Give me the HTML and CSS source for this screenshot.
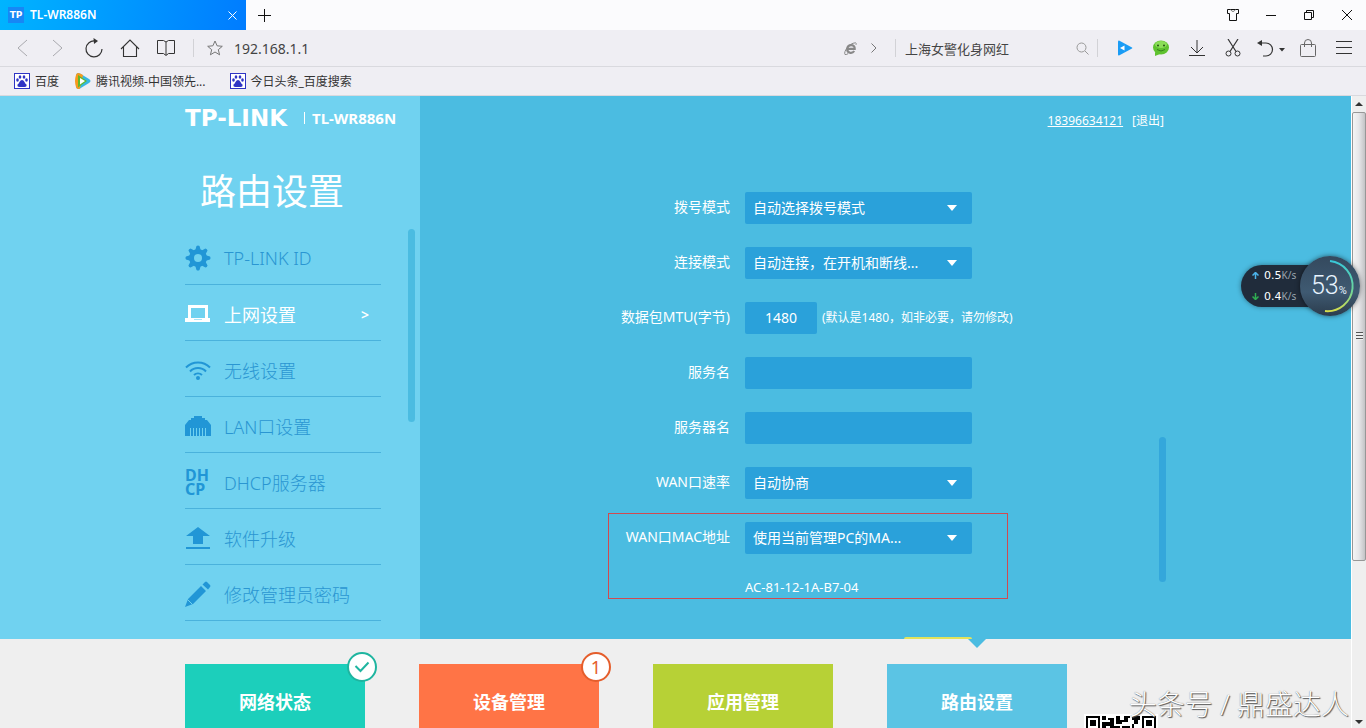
FILE: index.html
```html
<!DOCTYPE html>
<html lang="zh-CN">
  <head>
    <meta charset="UTF-8" />
    <meta name="viewport" content="width=device-width, initial-scale=1.0" />
    <title>TL-WR886N</title>
    <link rel="stylesheet" href="styles.css">
  </head>
  <body>
    <header class="browser">
      <div class="tabbar">
        <div class="tab">
          <span class="favicon">TP</span>
          <span class="tab-title">TL-WR886N</span>
          <button class="tab-close" aria-label="关闭标签">
            <svg width="9" height="9" viewBox="0 0 9 9"><path d="M.5.5l8 8M8.500 .5l-8 8" stroke="#fff"/></svg>
          </button>
        </div>
        <button class="icon" aria-label="新标签">
          <svg width="13" height="13" viewBox="0 0 13 13"><path d="M6.500 0v13M0 6.500h13" stroke="#111"/></svg>
        </button>
        <div class="window-buttons">
          <button class="winbtn" aria-label="皮肤">
            <svg width="14" height="14" viewBox="0 0 14 14" fill="none" stroke="#111"><path d="M1.500 1.500h11v4h-2v7h-7v-7h-2z"/><path d="M4.500 1.500q2.500 4 5 0" stroke="#777"/></svg>
          </button>
          <button class="winbtn" aria-label="最小化">
            <svg width="12" height="12" viewBox="0 0 12 12"><path d="M1 6.500h10" stroke="#111"/></svg>
          </button>
          <button class="winbtn" aria-label="还原">
            <svg width="12" height="12" viewBox="0 0 12 12" fill="none" stroke="#111"><path d="M1.500 3.500h7v7h-7zM3.500 3v-1.500h7v7H9"/></svg>
          </button>
          <button class="winbtn" aria-label="关闭">
            <svg width="12" height="12" viewBox="0 0 12 12"><path d="M1 1l10 10M11 1L1 11" stroke="#111"/></svg>
          </button>
        </div>
      </div>

      <div class="toolbar">
        <button class="icon" aria-label="后退">
          <svg width="12" height="18" viewBox="0 0 12 18" fill="none" stroke="#a9a9ae"><path d="M11 1L2 9l9 8"/></svg>
        </button>
        <button class="icon" aria-label="前进">
          <svg width="12" height="18" viewBox="0 0 12 18" fill="none" stroke="#a9a9ae"><path d="M1 1l9 8-9 8"/></svg>
        </button>
        <button class="icon" aria-label="刷新">
          <svg width="18" height="20" viewBox="0 0 18 20" fill="none" stroke="#333"><path d="M10 3a8 8 0 1 0 7 8" stroke-width="1.200"/><path d="M8.500 0l4.500 3-4 3z" fill="#333" stroke="none"/></svg>
        </button>
        <button class="icon" aria-label="主页">
          <svg width="20" height="18" viewBox="0 0 20 18" fill="none" stroke="#333"><path d="M1 10l9-9 9 9M3.500 8v9.500h13V8" stroke-width="1.100"/></svg>
        </button>
        <button class="icon" aria-label="收藏夹">
          <svg width="18" height="16" viewBox="0 0 18 16" fill="none" stroke="#333"><path d="M.5.5h6L9 2l2.500-1.500h6v13h-6L9 15.500 6.500 13.500h-6zM9 2v13"/></svg>
        </button>
        <span class="divider"></span>
        <button class="icon small" aria-label="收藏">
          <svg width="16" height="16" viewBox="0 0 16 16" fill="none" stroke="#777"><path d="M8 1l2.100 4.800 5.200.5-4 3.400 1.300 5.100L8 12l-4.600 2.800 1.300-5.100-4-3.400 5.200-.5z"/></svg>
        </button>
        <input class="address" type="text" value="192.168.1.1" aria-label="地址">
        <button class="icon small" aria-label="内核">
          <svg width="13" height="13" viewBox="0 0 13 13" fill="none" stroke="#888"><path d="M3.500 6.800h7.200c.3-5-7-5-7.500 0-.3 4.500 5 5.200 7 2.200" stroke-width="2.200"/><path d="M1 12.500C-.8 10 5 1 11.500.8q1.200.2.500 2M1 12.500q1 .5 3-.8"/></svg>
        </button>
        <button class="icon small" aria-label="更多">
          <svg width="6" height="10" viewBox="0 0 6 10" fill="none" stroke="#777"><path d="M.5.5L5 5 .5 9.500"/></svg>
        </button>
        <span class="divider"></span>
        <input class="search" type="text" value="上海女警化身网红" aria-label="搜索">
        <button class="icon small" aria-label="搜索">
          <svg width="13" height="13" viewBox="0 0 13 13" fill="none" stroke="#999"><circle cx="5.500" cy="5.500" r="4.500"/><path d="M9 9l3.500 3.500"/></svg>
        </button>
        <span class="divider search-end"></span>
        <button class="icon" aria-label="视频">
          <svg width="16" height="18" viewBox="0 0 16 18"><path d="M2 1.500l13 7q.7.500 0 1l-13 7q-1 .2-1-1v-13q0-1 1-1z" fill="#1a9cf5"/><path d="M7.500 6.500v5L3 9z" fill="#fff"/></svg>
        </button>
        <button class="icon" aria-label="微信">
          <svg width="18" height="16" viewBox="0 0 18 16"><ellipse cx="9" cy="7.500" rx="8" ry="7" fill="#5fc22f"/><path d="M3 12v4l5-2z" fill="#5fc22f"/><ellipse cx="9" cy="4.500" rx="6" ry="3.500" fill="#8bdd58"/><circle cx="6" cy="5.500" r="1" fill="#244f12"/><circle cx="12" cy="5.500" r="1" fill="#244f12"/><path d="M5 9.500q4 3 8 0" fill="none" stroke="#35801b"/></svg>
        </button>
        <button class="icon" aria-label="下载">
          <svg width="18" height="17" viewBox="0 0 18 17" fill="none" stroke="#333"><path d="M9 0v13M3 7l6 6 6-6M1 15.500h16"/></svg>
        </button>
        <button class="icon" aria-label="截图">
          <svg width="16" height="18" viewBox="0 0 16 18" fill="none" stroke="#333"><path d="M3 0l8 12.500M13 0L5 12.500" stroke-width="1.200"/><circle cx="3.500" cy="14.500" r="2.500"/><circle cx="12.500" cy="14.500" r="2.500"/></svg>
        </button>
        <button class="icon undo" aria-label="撤销">
          <svg width="28" height="17" viewBox="0 0 28 17" fill="none" stroke="#333"><path d="M3 3h6a6 6 0 0 1 0 13H6" stroke-width="1.200"/><path d="M0 3l5-3v6z" fill="#333" stroke="none"/><path d="M22 8h6l-3 3.500z" fill="#333" stroke="none"/></svg>
        </button>
        <button class="icon" aria-label="购物">
          <svg width="16" height="19" viewBox="0 0 16 19" fill="none" stroke="#666"><rect x=".5" y="5.500" width="15" height="12" rx="1"/><path d="M4.500 8V4a3.500 3.500 0 0 1 7 0v4"/></svg>
        </button>
        <button class="icon" aria-label="菜单">
          <svg width="16" height="14" viewBox="0 0 16 14" stroke="#333"><path d="M0 .5h16M0 6.500h16M0 12.500h16"/></svg>
        </button>
      </div>

      <nav class="bookmarks">
        <a href="#">
          <svg width="16" height="16" viewBox="0 0 16 16"><rect x=".5" y=".5" width="15" height="15" fill="#fff" stroke="#2e34c4"/><g fill="#2e34c4"><ellipse cx="3.500" cy="7" rx="1.300" ry="1.700"/><ellipse cx="6" cy="4" rx="1.300" ry="1.800"/><ellipse cx="10" cy="4" rx="1.300" ry="1.800"/><ellipse cx="12.500" cy="7" rx="1.300" ry="1.700"/><path d="M8 7q1.500 0 2.500 2t2 2.500q.5 2.500-2 2.500h-5q-2.500 0-2-2.500 1-.5 2-2.500T8 7z"/></g></svg>
          百度</a>
        <a href="#">
          <svg width="16" height="16" viewBox="0 0 16 16"><path d="M1 2Q2-1 5 .5l9 5.500q3 2 0 4l-9 5.500Q2 17 1 14z" fill="#35b7e3"/><path d="M1 2Q2-1 5 .5L8 2 5 15.500Q2 17 1 14-1 8 1 2z" fill="#f7991c"/><path d="M3 2l9 6-9 6.500z" fill="#5fb82c"/><path d="M5 5l5 3-5 3.500z" fill="#fff"/></svg>
          腾讯视频-中国领先...</a>
        <a href="#">
          <svg width="16" height="16" viewBox="0 0 16 16"><rect x=".5" y=".5" width="15" height="15" fill="#fff" stroke="#2e34c4"/><g fill="#2e34c4"><ellipse cx="3.500" cy="7" rx="1.300" ry="1.700"/><ellipse cx="6" cy="4" rx="1.300" ry="1.800"/><ellipse cx="10" cy="4" rx="1.300" ry="1.800"/><ellipse cx="12.500" cy="7" rx="1.300" ry="1.700"/><path d="M8 7q1.500 0 2.500 2t2 2.500q.5 2.500-2 2.500h-5q-2.500 0-2-2.500 1-.5 2-2.500T8 7z"/></g></svg>
          今日头条_百度搜索</a>
      </nav>
    </header>

    <div class="viewport">
      <div class="page">
        <div class="panel">
          <aside class="sidebar">
            <div class="brand">
              <span class="logo">TP-LINK</span>
              <span class="model">TL-WR886N</span>
            </div>
            <h1>路由设置</h1>
            <ul class="menu">
              <li><a href="#">
                <svg width="26" height="26" viewBox="0 0 26 26"><g fill="#2196d6"><circle cx="13" cy="13" r="9"/><g id="teeth"><path d="M10 6l1.500-5q1.500-1 3 0L16 6v14l-1.500 5q-1.500 1-3 0L10 20zM6 10l-5 1.500q-1 1.500 0 3L6 16h14l5-1.500q1-1.500 0-3L20 10z"/></g><use href="#teeth" transform="rotate(45 13 13)"/></g><circle cx="13" cy="13" r="4" fill="#70d2f0"/></svg>
                TP-LINK ID</a></li>
              <li class="active"><a href="#">
                <svg width="26" height="26" viewBox="0 0 26 26"><path d="M3 4h20v13h2v4H0v-4h3zM6 7v10h14V7z" fill="#fff" fill-rule="evenodd"/><path d="M9 18.500h8" stroke="#a9e4f6"/></svg>
                上网设置<span class="arrow">&gt;</span></a></li>
              <li><a href="#">
                <svg width="26" height="26" viewBox="0 0 26 26" fill="none" stroke="#2196d6" stroke-width="2"><path d="M1 10.500a17 17 0 0 1 24 0M5 14.500a11 11 0 0 1 16 0M9 18a6 6 0 0 1 8 0"/><circle cx="13" cy="21" r="2" fill="#2196d6" stroke="none"/></svg>
                无线设置</a></li>
              <li><a href="#">
                <svg width="26" height="26" viewBox="0 0 26 26"><path d="M0 23V12l4-5h2V5h3V3h8v2h3v2h2l4 5v11z" fill="#2196d6"/><path d="M5.500 15v8M8.500 15v8M11.500 15v8M14.500 15v8M17.500 15v8M20.500 15v8" stroke="#70d2f0"/></svg>
                LAN口设置</a></li>
              <li><a href="#">
                <span class="dhcp-icon">DH<br>CP</span>
                DHCP服务器</a></li>
              <li><a href="#">
                <svg width="26" height="26" viewBox="0 0 26 26" fill="#2196d6"><path d="M13 2l12 9h-7v8H8v-8H1zM1 22h24v2H1z"/></svg>
                软件升级</a></li>
              <li><a href="#">
                <svg width="26" height="26" viewBox="0 0 26 26" fill="#2196d6"><path d="M16 5l5 5L8 23l-8 3 3-8zM17.500 3.500L20 1q1-1 2 0l3 3q1 1 0 2l-2 2.500z"/><path d="M2.500 18.500l5 5" stroke="#70d2f0"/></svg>
                修改管理员密码</a></li>
            </ul>
            <div class="menu-scroll"></div>
          </aside>

          <main class="main">
            <div class="account">
              <a href="#" class="user">18396634121</a>
              <a href="#">[退出]</a>
            </div>
            <form class="form">
              <div class="row">
                <label for="dial">拨号模式</label>
                <div class="select"><select id="dial"><option>自动选择拨号模式</option></select></div>
              </div>
              <div class="row">
                <label for="connect">连接模式</label>
                <div class="select"><select id="connect"><option>自动连接，在开机和断线...</option></select></div>
              </div>
              <div class="row">
                <label for="mtu">数据包MTU(字节)</label>
                <input id="mtu" class="mtu" type="text" value="1480">
                <span class="hint">(默认是1480，如非必要，请勿修改)</span>
              </div>
              <div class="row">
                <label for="service">服务名</label>
                <input id="service" type="text">
              </div>
              <div class="row">
                <label for="server">服务器名</label>
                <input id="server" type="text">
              </div>
              <div class="row">
                <label for="speed">WAN口速率</label>
                <div class="select"><select id="speed"><option>自动协商</option></select></div>
              </div>
              <div class="mac">
                <div class="row">
                  <label for="mac">WAN口MAC地址</label>
                  <div class="select"><select id="mac"><option>使用当前管理PC的MA...</option></select></div>
                </div>
                <p>AC-81-12-1A-B7-04</p>
              </div>
              <button type="button" class="save" aria-label="保存"></button>
            </form>
            <div class="form-scroll"></div>
          </main>
        </div>

        <footer class="footer">
          <nav class="tiles">
            <a href="#" class="tile status">网络状态
              <span class="badge"><svg width="16" height="12" viewBox="0 0 16 12"><path d="M1.500 5l5 5 8-8.500" fill="none" stroke="#1fb5a0" stroke-width="2"/></svg></span>
            </a>
            <a href="#" class="tile devices">设备管理<span class="badge">1</span></a>
            <a href="#" class="tile apps">应用管理</a>
            <a href="#" class="tile router">路由设置</a>
          </nav>
          <svg class="qr" width="74" height="74" viewBox="0 0 74 74"><rect width="74" height="74" fill="#fff"/><g fill="none" stroke="#000" stroke-width="2"><path d="M3 3h12v12H3zM59 3h12v12H59z"/></g><path d="M6 6h6v6H6zM62 6h6v6h-6zM18 2h4v4h-4zM24 4h6v2h-6zM32 2h4v4h4V2h6v2h-2v4h-6v2h-6zM48 2h8v4h-2v4h-4V6h-2zM18 8h8v4h-4v2h-4zM26 6h4v6h6v2H26zM38 12h8v4h-8zM48 10h2v4h6v2h-8zM18 16h8v4h-8zM30 16h6v4h-6z"/></svg>
        </footer>
      </div>

      <div class="scrollbar">
        <span class="sb-arrow up"></span>
        <div class="thumb"><span class="grip"></span></div>
        <span class="sb-arrow down"></span>
      </div>

      <div class="netspeed">
        <div class="rates">
          <div><svg width="7" height="7" viewBox="0 0 7 7"><path d="M3.500 7V1M.5 3.500l3-3 3 3" fill="none" stroke="#4cb4ea" stroke-width="1.500"/></svg><b>0.5</b>K/s</div>
          <div><svg width="7" height="7" viewBox="0 0 7 7"><path d="M3.500 0v6M.5 3.500l3 3 3-3" fill="none" stroke="#2fae52" stroke-width="1.500"/></svg><b>0.4</b>K/s</div>
        </div>
        <div class="gauge">
          <svg width="60" height="60" viewBox="0 0 60 60">
            <defs><linearGradient id="ring" x1="0" y1="0" x2="0" y2="1"><stop offset="0" stop-color="#38c8d8"/><stop offset=".6" stop-color="#6fd69a"/><stop offset="1" stop-color="#d5dc4c"/></linearGradient></defs>
            <path d="M30 5a25 25 0 1 1-5 50" fill="none" stroke="url(#ring)" stroke-width="2"/>
          </svg>
          <span class="percent">53<small>%</small></span>
        </div>
      </div>
      <div class="watermark">头条号 / 鼎盛达人</div>
    </div>
  </body>
</html>
```
FILE: styles.css
```css
* {
  padding: 0;
  margin: 0;
  box-sizing: border-box;
}
body {
  height: 100vh;
  display: flex;
  flex-direction: column;
  overflow: hidden;
  font-family: "Noto Sans", "Noto Sans CJK SC", sans-serif;
  font-size: 14px;
  background: #efefef;
}
a {
  color: inherit;
  text-decoration: none;
}
button {
  border: none;
  background: none;
  font: inherit;
  cursor: pointer;
}
input,
select {
  border: none;
  outline: none;
  background: none;
  font: inherit;
  color: inherit;
}
svg {
  display: block;
  flex-shrink: 0;
}

/* browser */
.tabbar {
  display: flex;
  height: 30px;
  background: #fbfbfd;
}
.tab {
  display: flex;
  align-items: center;
  width: 246px;
  padding: 0 8px;
  background: linear-gradient(100deg, #00b4ff, #007cff);
  color: #fff;
  font-size: 12px;
}
.favicon {
  width: 16px;
  height: 16px;
  margin-right: 6px;
  background: #1787f5;
  font: bold 9px/16px "DejaVu Sans", sans-serif;
  text-align: center;
}
.tab-title {
  flex: 1;
  line-height: 28px;
  font-weight: 600;
}
.tab-close {
  padding: 1px;
}
.icon {
  display: flex;
  align-items: center;
  justify-content: center;
  width: 36px;
  flex-shrink: 0;
}
.icon.small {
  width: 24px;
}
.icon.undo {
  width: 39px;
}
.window-buttons {
  display: flex;
  margin-left: auto;
}
.winbtn {
  display: flex;
  align-items: center;
  justify-content: center;
  width: 38px;
}
.toolbar {
  display: flex;
  height: 37px;
  padding: 0 4px;
  background: #efeef3;
  border-bottom: 1px solid #d9d9de;
  color: #444;
}
.divider {
  width: 1px;
  height: 18px;
  margin: 9px 9px 0;
  background: #d2d2d6;
}
.divider.search-end {
  margin-left: 3px;
}
.address {
  flex: 1;
  min-width: 0;
  padding-left: 7px;
  font-size: 14px;
}
.search {
  width: 165px;
  font-size: 13px;
}
.bookmarks {
  display: flex;
  align-items: center;
  gap: 16px;
  height: 29px;
  padding-left: 14px;
  background: #efeef3;
  border-bottom: 1px solid #d9d9de;
  font-size: 12px;
  color: #333;
}
.bookmarks a {
  display: flex;
  align-items: center;
  gap: 5px;
}
.bookmarks a:last-child {
  margin-left: 8px;
}

/* router page */
.viewport {
  position: relative;
  flex: 1;
  display: flex;
  min-height: 0;
}
.page {
  flex: 1;
  display: flex;
  flex-direction: column;
  overflow: hidden;
}
.panel {
  display: flex;
  background: #4bbce1;
  color: #fff;
}
.sidebar {
  position: relative;
  width: calc((100% - 981px) / 2 + 235px);
  padding: 10px 39px 18px calc((100vw - 996px) / 2);
  background: #70d2f0;
  flex-shrink: 0;
}
.brand {
  display: flex;
  align-items: center;
  height: 24px;
  white-space: nowrap;
}
.logo {
  width: 119px;
  flex-shrink: 0;
  font: bold 23px/24px "DejaVu Sans", sans-serif;
}
.model {
  padding-left: 7px;
  border-left: 1px solid #fff;
  font-size: 15px;
  line-height: 12px;
  font-weight: 700;
}
h1 {
  padding: 36px 0 12px 15px;
  font-size: 36px;
  line-height: 51px;
  font-weight: 400;
}
.menu {
  list-style: none;
  color: #2a96d2;
}
.menu a {
  display: flex;
  align-items: center;
  gap: 13px;
  height: 56px;
  padding-top: 3px;
  border-bottom: 1px solid #4ab2dc;
  font-size: 18px;
  font-weight: 300;
  white-space: nowrap;
}
.menu .active a {
  color: #fff;
  font-weight: 400;
}
.menu .arrow {
  margin-left: auto;
  padding-right: 12px;
  font-size: 14px;
  font-weight: 600;
}
.dhcp-icon {
  width: 26px;
  font-size: 16px;
  line-height: 14px;
  font-weight: 700;
  color: #2196d6;
}
.menu-scroll,
.form-scroll {
  position: absolute;
  width: 7px;
  border-radius: 4px;
}
.menu-scroll {
  top: 133px;
  right: 5px;
  height: 193px;
  background: #4bbce1;
}
.main {
  position: relative;
  flex: 1;
  padding-right: calc((100vw - 996px) / 2);
}
.account {
  display: flex;
  justify-content: flex-end;
  gap: 9px;
  height: 96px;
  padding: 15px 2px 0 0;
  font-size: 12px;
  line-height: 20px;
}
.user {
  text-decoration: underline;
}
.form {
  max-height: 447px;
  overflow: hidden;
}
.row {
  display: flex;
  height: 32px;
  margin-bottom: 23px;
  white-space: nowrap;
}
.row label {
  width: 310px;
  margin-right: 15px;
  text-align: right;
  line-height: 30px;
}
.row input,
.row select {
  width: 227px;
  height: 32px;
  padding: 0 8px 2px;
  background: #2aa1da;
  border-radius: 2px;
}
.row .mtu {
  width: 72px;
  text-align: center;
}
.hint {
  margin-left: 5px;
  font-size: 12px;
  line-height: 32px;
}
.select {
  position: relative;
}
.select select {
  display: block;
  appearance: none;
}
.select::after {
  content: "";
  position: absolute;
  top: 13px;
  right: 15px;
  border: 5px solid transparent;
  border-top: 6px solid #fff;
  border-bottom: none;
  pointer-events: none;
}
.mac {
  position: relative;
}
.mac::before {
  content: "";
  position: absolute;
  top: -9px;
  left: 188px;
  width: 398px;
  height: 84px;
  border: 1px solid #d04a50;
  pointer-events: none;
}
.mac p {
  padding-left: 325px;
  font-size: 13px;
  line-height: 20px;
}
.save {
  display: block;
  width: 68px;
  height: 32px;
  margin: 40px 0 0 484px;
  background: #e3e35a;
  border-radius: 2px;
}
.form-scroll {
  top: 341px;
  right: calc((100vw - 996px) / 2);
  height: 145px;
  background: #34a7db;
}
.footer {
  display: flex;
  align-items: flex-start;
  width: 981px;
  margin: 0 auto;
  padding-top: 25px;
}
.tiles {
  display: flex;
  gap: 54px;
}
.tile {
  position: relative;
  width: 180px;
  height: 180px;
  padding-top: 24px;
  color: #fff;
  font-size: 18px;
  line-height: 28px;
  font-weight: 700;
  text-align: center;
}
.status {
  background: #1ccfbb;
}
.devices {
  background: #ff7446;
}
.apps {
  background: #b7d136;
}
.router {
  background: #5bc4e4;
}
.router::before {
  content: "";
  position: absolute;
  top: -25px;
  left: 81px;
  border: 9px solid transparent;
  border-top-color: #4bbce1;
  border-bottom: none;
}
.badge {
  position: absolute;
  top: -12px;
  right: -12px;
  display: flex;
  align-items: center;
  justify-content: center;
  width: 30px;
  height: 30px;
  border: 2px solid #1fb5a0;
  border-radius: 50%;
  background: #fff;
  font-weight: 400;
}
.devices .badge {
  border-color: #e55e2c;
  color: #e55e2c;
}
.qr {
  margin: 50px 0 0 17px;
}

/* page scrollbar */
.scrollbar {
  display: flex;
  flex-direction: column;
  width: 15px;
  background: #efefef;
  border-left: 1px solid #fff;
}
.sb-arrow {
  margin: 6px auto;
  border: 4px solid transparent;
}
.sb-arrow.up {
  border-top: none;
  border-bottom-color: #333;
}
.sb-arrow.down {
  border-bottom: none;
  border-top-color: #333;
  margin: auto auto 4px;
}
.thumb {
  display: flex;
  align-items: center;
  justify-content: center;
  height: 71%;
  border: 1px solid #979797;
  border-radius: 2px;
  background: linear-gradient(90deg, #f5f5f5, #e6e6e8 50%, #c3c3c6);
}
.grip {
  width: 7px;
  height: 8px;
  background: repeating-linear-gradient(#555 0 1px, #eee 1px 3px);
}

/* desktop speed widget */
.netspeed {
  position: absolute;
  top: 160px;
  right: 6px;
  display: flex;
  align-items: center;
}
.rates {
  width: 89px;
  height: 42px;
  margin-right: -30px;
  padding-left: 11px;
  border-radius: 21px 0 0 21px;
  background: #202c3b;
  box-shadow: 0 0 5px #0006;
  color: #9aa4ae;
  font-size: 10px;
  line-height: 21px;
}
.rates div {
  display: flex;
  align-items: center;
}
.rates b {
  margin-left: 5px;
  color: #fff;
  font-size: 11px;
  font-weight: 400;
  font-family: "DejaVu Sans", sans-serif;
}
.gauge {
  position: relative;
  width: 60px;
  height: 60px;
  border-radius: 50%;
  background: linear-gradient(#34495e, #3f5a72 60%, #2b3c4d);
  box-shadow: 0 0 5px #0008;
}
.percent {
  position: absolute;
  top: 14px;
  left: 11px;
  color: #e8f4ff;
  font: 300 25px/32px Roboto, sans-serif;
}
.percent small {
  font-size: 11px;
  font-weight: 400;
}
.watermark {
  position: absolute;
  right: 17px;
  bottom: 4px;
  color: #fff;
  font-size: 28px;
  line-height: 40px;
  font-weight: 300;
  text-shadow: 1px 1px 1px #555, 0 0 1px #666;
}
```
